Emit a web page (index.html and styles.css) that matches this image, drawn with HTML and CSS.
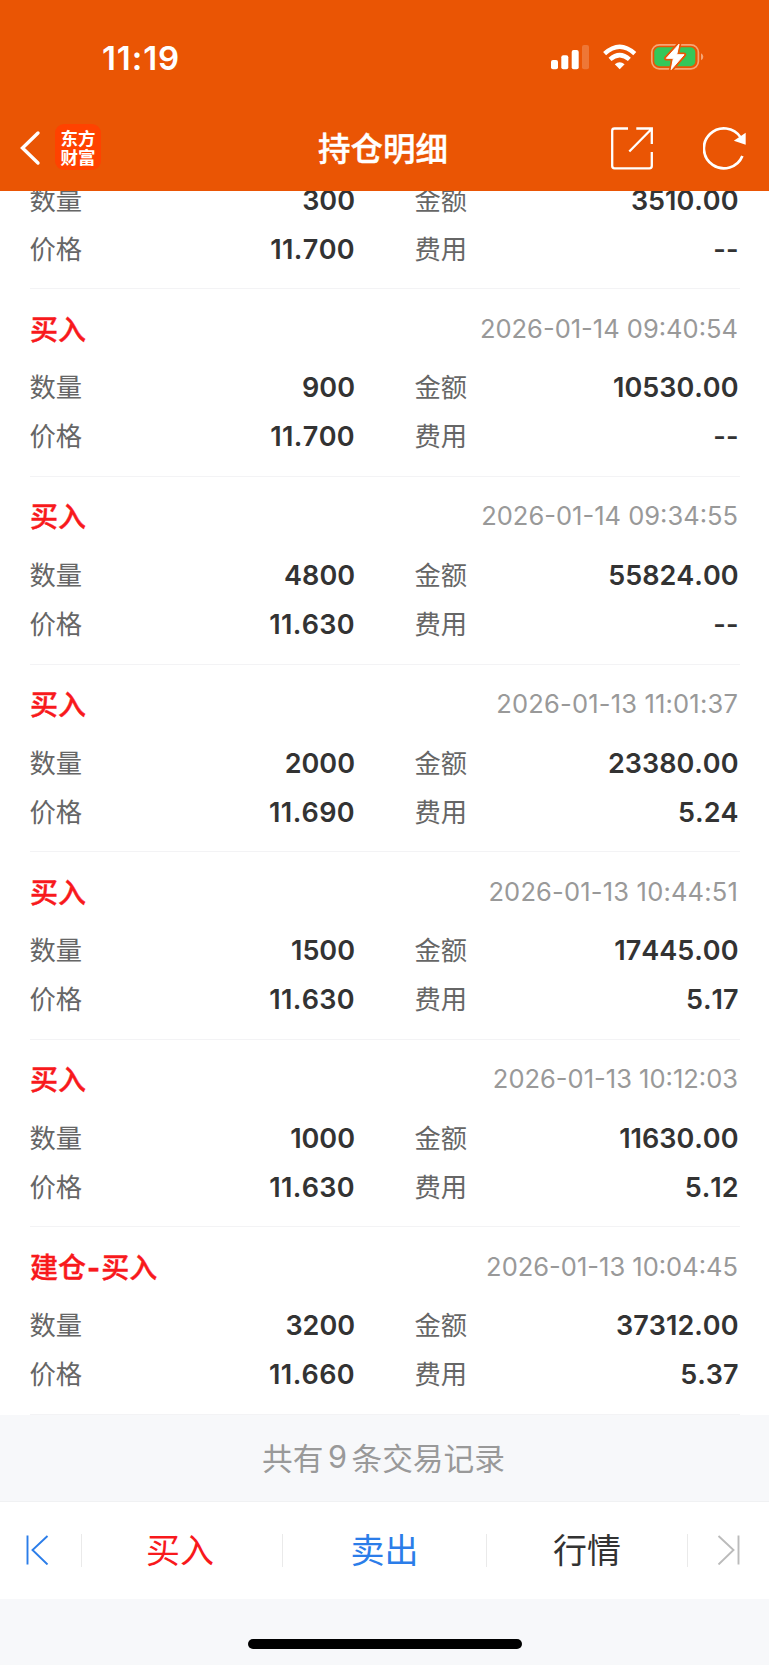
FILE: index.html
```html
<!DOCTYPE html>
<html lang="zh-CN">
<head>
<meta charset="utf-8">
<title>持仓明细</title>
<link rel="stylesheet" href="styles.css">
</head>
<body>
<div class="screen">
  <header class="header">
    <div class="status">
      <span class="clock">11:19</span>
      <svg class="status-icons" width="156" height="30" viewBox="0 0 156 30">
        <g fill="#fff">
          <rect x="1" y="17" width="7" height="9.3" rx="2"/>
          <rect x="11.3" y="12.3" width="7" height="14" rx="2"/>
          <rect x="21.7" y="7" width="7" height="19.3" rx="2"/>
          <rect x="32" y="2" width="7" height="24.3" rx="2" opacity=".2"/>
          <path d="M69.7 26.2L64.8 21.2Q69.7 17.4 74.6 21.2Z"/>
        </g>
        <g fill="none" stroke="#fff" stroke-width="4.4">
          <path d="M54.6 10.6Q69.7-3.2 84.8 10.6"/>
          <path d="M60 16.4Q69.7 7.8 79.4 16.4"/>
        </g>
        <rect x="101.8" y="1.8" width="46.6" height="24" rx="7.5" fill="none" stroke="#f6a574" stroke-width="1.7"/>
        <path d="M151 10.3Q153.3 11.3 153.3 13.8T151 17.3Z" fill="#f6a574"/>
        <rect x="104.3" y="4.3" width="41" height="19" rx="5" fill="#34c759"/>
        <path d="M129 1.2L116.3 15.3H123.4L121.2 26.6L134 11.7H126.7Z" fill="#fff" stroke="#ea5504" stroke-width="4.4" stroke-linejoin="round"/>
        <path d="M129 1.2L116.3 15.3H123.4L121.2 26.6L134 11.7H126.7Z" fill="#fff" stroke="#fff" stroke-width="1" stroke-linejoin="round"/>
      </svg>
    </div>
    <div class="titlebar">
      <div class="title-left">
        <svg width="22" height="36" viewBox="0 0 22 36"><path d="M19 3L3.5 18L19 33" fill="none" stroke="#fff" stroke-width="3.4" stroke-linecap="round"/></svg>
        <div class="logo"><span>东方</span><span>财富</span></div>
      </div>
      <h1 class="title">持仓明细</h1>
      <div class="title-right">
        <svg width="42" height="43" viewBox="0 0 42 43"><path d="M17 1.5H3.5Q1.2 1.5 1.2 3.8V39Q1.2 41.3 3.5 41.3H38.5Q40.8 41.3 40.8 39V25M25.3 1.5H40.8V17M40.5 2L18.3 24.5" fill="none" stroke="#fff" stroke-width="2.3"/></svg>
        <svg width="44" height="44" viewBox="0 0 44 44"><path d="M39.4 30A20 20 0 1 1 37.8 11.6" fill="none" stroke="#fff" stroke-width="2.7"/><path d="M42.7 6.8V18.7L30.8 14.8Z" fill="#fff"/></svg>
      </div>
    </div>
  </header>

  <main class="records">
    <section class="record clipped">
      <div class="row"><span class="label">数量</span><b>300</b><span class="label right">金额</span><b>3510.00</b></div>
      <div class="row"><span class="label">价格</span><b class="ones">11.700</b><span class="label right">费用</span><b>--</b></div>
    </section>
    <section class="record">
      <div class="head"><span class="kind">买入</span><time>2026-01-14 09:40:54</time></div>
      <div class="row"><span class="label">数量</span><b>900</b><span class="label right">金额</span><b>10530.00</b></div>
      <div class="row"><span class="label">价格</span><b class="ones">11.700</b><span class="label right">费用</span><b>--</b></div>
    </section>
    <section class="record">
      <div class="head"><span class="kind">买入</span><time>2026-01-14 09:34:55</time></div>
      <div class="row"><span class="label">数量</span><b>4800</b><span class="label right">金额</span><b>55824.00</b></div>
      <div class="row"><span class="label">价格</span><b class="ones">11.630</b><span class="label right">费用</span><b>--</b></div>
    </section>
    <section class="record">
      <div class="head"><span class="kind">买入</span><time class="ones">2026-01-13 11:01:37</time></div>
      <div class="row"><span class="label">数量</span><b>2000</b><span class="label right">金额</span><b>23380.00</b></div>
      <div class="row"><span class="label">价格</span><b class="ones">11.690</b><span class="label right">费用</span><b>5.24</b></div>
    </section>
    <section class="record">
      <div class="head"><span class="kind">买入</span><time class="ones">2026-01-13 10:44:51</time></div>
      <div class="row"><span class="label">数量</span><b>1500</b><span class="label right">金额</span><b>17445.00</b></div>
      <div class="row"><span class="label">价格</span><b class="ones">11.630</b><span class="label right">费用</span><b>5.17</b></div>
    </section>
    <section class="record">
      <div class="head"><span class="kind">买入</span><time>2026-01-13 10:12:03</time></div>
      <div class="row"><span class="label">数量</span><b>1000</b><span class="label right">金额</span><b>11630.00</b></div>
      <div class="row"><span class="label">价格</span><b class="ones">11.630</b><span class="label right">费用</span><b>5.12</b></div>
    </section>
    <section class="record">
      <div class="head"><span class="kind">建仓<span class="dash">-</span>买入</span><time>2026-01-13 10:04:45</time></div>
      <div class="row"><span class="label">数量</span><b>3200</b><span class="label right">金额</span><b>37312.00</b></div>
      <div class="row"><span class="label">价格</span><b class="ones">11.660</b><span class="label right">费用</span><b>5.37</b></div>
    </section>
  </main>

  <div class="total">共有<span class="count">9</span>条交易记录</div>

  <nav class="nav">
    <a class="step"><svg width="24" height="30" viewBox="0 0 24 30"><path d="M2.5 .5V29.5M22.5 1L7.5 15L22.5 29.5" fill="none" stroke="#2b7de9" stroke-width="1.9"/></svg></a>
    <a class="tab buy">买入</a>
    <a class="tab sell">卖出</a>
    <a class="tab quote">行情</a>
    <a class="step last"><svg width="24" height="30" viewBox="0 0 24 30"><path d="M21.5 .5V29.5M1.5 1L16.5 15L1.5 29.5" fill="none" stroke="#bbb" stroke-width="1.9"/></svg></a>
  </nav>
  <div class="home"><i></i></div>
</div>
</body>
</html>
```

FILE: styles.css
```css
* { box-sizing: border-box; }
body {
  margin: 0;
  background: #f7f8fa;
  font-family: Inter, "Noto Sans CJK SC", sans-serif;
  color: #333;
}
.screen { width: 769px; height: 1665px; display: flex; flex-direction: column; overflow: hidden; }
.header { height: 191px; flex: none; background: #ea5504; color: #fff; }
.status { height: 105px; padding: 6px 63px 0 102px; display: flex; align-items: center; justify-content: space-between; }
.clock { font-size: 33px; font-weight: 600; letter-spacing: .9px; font-kerning: none; padding-top: 5px; }
.status-icons { margin-top: 4px; }
.titlebar { height: 86px; padding: 0 22px 0 19px; display: grid; grid-template-columns: 1fr auto 1fr; align-items: center; }
.title-left { display: flex; align-items: center; gap: 14px; }
.logo {
  width: 46px; height: 46px; border-radius: 9px; background: #ff4200;
  display: flex; flex-direction: column; align-items: center; justify-content: center;
  font: 700 17.5px/19.5px "Noto Sans CJK SC", sans-serif;
  margin-top: -2px;
}
.title { margin: 0; font-size: 32.5px; font-weight: 500; line-height: 48px; padding-top: 4px; -webkit-text-stroke: .4px #fff; }
.title-right { display: flex; align-items: center; justify-content: flex-end; gap: 50.5px; }

.records { background: #fff; flex: none; height: 1224px; padding: 0 29px 0 30px; }
.record { height: 187.6px; padding-top: 17px; border-bottom: 1px solid #f3f3f5; }
.record.clipped { height: 98.4px; padding: 0; overflow: hidden; display: flex; flex-direction: column; justify-content: flex-end; padding-bottom: 14px; }
.head { display: flex; justify-content: space-between; align-items: center; height: 46px; margin-bottom: 11px; }
.kind { color: #f8191c; font-size: 28px; font-weight: 500; padding-bottom: 3px; -webkit-text-stroke: .4px #f8191c; }
.dash { padding: 0 1px; font-weight: 700; }
time { color: #999; font-size: 25.5px; padding: 0 2px 2px 0; font-kerning: none; }
time.ones { letter-spacing: .18px; }
.row { height: 49px; flex: none; display: grid; grid-template-columns: 100px 225px 160px 1fr; align-items: center; }
.label { color: #666; font-size: 26.3px; padding-bottom: 4px; margin-left: -.5px; }
.label.right { padding-left: 60px; }
.row b { font-size: 27px; font-weight: 600; text-align: right; font-kerning: none; }
.row b:last-child { padding-right: 1.5px; }
.row b.ones { letter-spacing: .35px; }

.total { height: 86.5px; flex: none; display: flex; align-items: center; justify-content: center; color: #999; font-size: 30.7px; border-bottom: 1px solid #f0f1f3; padding: 0 2px 3px 0; }
.count { margin: 0 4.5px; }
.nav { height: 97px; flex: none; background: #fff; display: grid; grid-template-columns: 82px 201px 204px 201px 1fr; align-items: center; }
.step, .tab { height: 33px; display: flex; align-items: center; border-right: 1px solid #eaeaea; }
.step { padding-left: 25px; }
.step.last { padding-left: 29px; border: 0; }
.tab { justify-content: center; font-size: 34px; padding: 0 0 3px 0; }
.tab.buy { color: #f8191c; padding-right: 4px; }
.sell { color: #2b7de9; }
.quote { color: #333; }
.home { flex: 1; display: flex; justify-content: center; align-items: flex-end; padding-bottom: 16px; }
.home i { width: 274px; height: 10px; border-radius: 5px; background: #000; }
```
